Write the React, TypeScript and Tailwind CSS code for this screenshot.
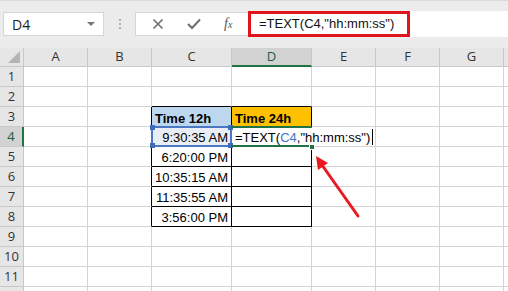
import React from 'react'

const cols = [
  { id: 'A', w: 64 },
  { id: 'B', w: 64 },
  { id: 'C', w: 80 },
  { id: 'D', w: 80 },
  { id: 'E', w: 64 },
  { id: 'F', w: 64 },
  { id: 'G', w: 64 },
  { id: 'H', w: 64 },
]

const times = ['9:30:35 AM', '6:20:00 PM', '10:35:15 AM', '11:35:55 AM', '3:56:00 PM']
const rows = Array.from({ length: 12 }, (_, i) => i + 1)

const ui = { fontFamily: '"Open Sans", "Noto Sans", sans-serif' }
const cellFont = { fontFamily: '"Liberation Sans", Arial, sans-serif' }

function inTable(r: number, c: string) {
  return r >= 3 && r <= 8 && (c === 'C' || c === 'D')
}

function Cell({ r, c }: { r: number; c: string }) {
  // gridline colours: black where the table's border sits on this edge
  const rightBlack = inTable(r, c) || (r >= 3 && r <= 8 && c === 'B')
  const bottomBlack = inTable(r, c) || (r === 2 && (c === 'C' || c === 'D'))
  let bg = 'bg-white'
  if (r === 3 && c === 'C') bg = 'bg-[#bdd7ee]'
  if (r === 3 && c === 'D') bg = 'bg-[#ffc000]'
  if (r === 4 && c === 'C') bg = 'bg-[#e9eef6]'

  return (
    <div
      className={`relative h-[20px] border-r border-b ${bg} ${rightBlack ? 'border-r-black' : 'border-r-[#d4d4d4]'} ${bottomBlack ? 'border-b-black' : 'border-b-[#d4d4d4]'}`}
    >
      {r === 3 && (c === 'C' || c === 'D') && (
        <span className="absolute left-[3px] bottom-[1px] text-[13px] font-bold leading-none text-black" style={cellFont}>
          {c === 'C' ? 'Time 12h' : 'Time 24h'}
        </span>
      )}
      {r >= 4 && r <= 8 && c === 'C' && (
        <span className="absolute right-[3px] bottom-[2px] text-[13px] leading-none text-black" style={cellFont}>
          {times[r - 4]}
        </span>
      )}
      {r === 4 && c === 'C' && (
        <div className="absolute -left-[1px] -top-[1px] w-[81px] h-[21px] border-2 border-[#4a78c2] z-10">
          <span className="absolute -left-[3px] -top-[3px] w-[5px] h-[5px] bg-[#3f6cb5]" />
          <span className="absolute -right-[3px] -top-[3px] w-[5px] h-[5px] bg-[#3f6cb5]" />
          <span className="absolute -left-[3px] -bottom-[3px] w-[5px] h-[5px] bg-[#3f6cb5]" />
          <span className="absolute -right-[3px] -bottom-[3px] w-[5px] h-[5px] bg-[#3f6cb5]" />
        </div>
      )}
      {r === 4 && c === 'D' && (
        <>
          <div className="absolute left-[1px] top-0 w-[142px] h-[19px] bg-white z-10 flex items-end pb-[2px]">
            <span className="text-[13px] leading-none text-black whitespace-nowrap pl-[2px]" style={cellFont}>
              =TEXT(<span className="text-[#4472c4]">C4</span>,"hh:mm:ss")
            </span>
            <span className="ml-[2px] w-px h-[16px] bg-black mb-[-1px]" />
          </div>
          <div className="absolute -left-[1px] -top-[1px] w-[81px] h-[21px] border-t-2 border-b-2 border-[#217346] z-20" />
          <span className="absolute -right-[4px] -bottom-[4px] w-[6px] h-[6px] bg-[#217346] border border-white z-30" />
        </>
      )}
    </div>
  )
}

export default function App() {
  return (
    <div className="w-[508px] h-[291px] overflow-hidden bg-[#e8e8e8] select-none">
      {/* formula bar */}
      <div className="h-[48px] flex items-center pt-[2px] pb-[3px] border-t border-[#d9d9d9] bg-[#ececec]">
        <div className="ml-[3px] w-[101px] h-[24px] bg-white border border-[#d6d6d6] flex items-center justify-between px-[8px]">
          <span className="text-[14px] text-[#222]" style={ui}>D4</span>
          <span className="w-0 h-0 border-l-[4px] border-r-[4px] border-t-[4px] border-l-transparent border-r-transparent border-t-[#777]" />
        </div>
        <div className="w-[31px] flex flex-col items-center gap-[2px]">
          <span className="w-[2px] h-[2px] bg-[#b0b0b0]" />
          <span className="w-[2px] h-[2px] bg-[#b0b0b0]" />
          <span className="w-[2px] h-[2px] bg-[#b0b0b0]" />
        </div>
        <div className="w-[113px] h-[24px] bg-white border border-[#d6d6d6] border-r-0 flex items-center justify-around px-[4px]">
          <svg width="12" height="12" viewBox="0 0 12 12">
            <path d="M1.5 1.5 L10.5 10.5 M10.5 1.5 L1.5 10.5" stroke="#6e6e6e" strokeWidth="1.6" />
          </svg>
          <svg width="14" height="12" viewBox="0 0 14 12">
            <path d="M1 6 L5 10 L13 1.5" stroke="#6e6e6e" strokeWidth="2" fill="none" />
          </svg>
          <span className="text-[14px] italic text-[#555] leading-none" style={{ fontFamily: '"Liberation Serif", serif' }}>
            f<span className="text-[10px]">x</span>
          </span>
        </div>
        <div className="flex-1 h-[26px] bg-white flex items-center">
          <div className="w-[162px] h-[26px] border-[3px] border-[#e0141a] flex items-center pl-[8px]">
            <span className="text-[13px] text-[#111] whitespace-nowrap" style={cellFont}>=TEXT(C4,"hh:mm:ss")</span>
          </div>
        </div>
      </div>

      {/* sheet */}
      <div className="relative">
        <div className="flex h-[19px]">
          <div className="w-[24px] shrink-0 border-r border-b border-[#c8c8c8] bg-[#e6e6e6] relative">
            <svg className="absolute right-[3px] bottom-[3px]" width="12" height="12" viewBox="0 0 12 12">
              <path d="M12 0 L12 12 L0 12 Z" fill="#b4b4b4" />
            </svg>
          </div>
          {cols.map((c) => (
            <div
              key={c.id}
              style={{ width: c.w }}
              className={`shrink-0 flex items-center justify-center text-[13px] border-r ${c.id === 'D' ? 'bg-[#d2d2d2] text-[#1e5c3a] border-b-2 border-b-[#217346] border-r-[#c8c8c8]' : 'bg-[#e6e6e6] text-[#333] border-b border-[#c8c8c8]'}`}
            >
              {c.id !== 'H' && <span style={ui}>{c.id}</span>}
            </div>
          ))}
        </div>
        {rows.map((r) => (
          <div key={r} className="flex">
            <div
              className={`w-[24px] h-[20px] shrink-0 flex items-center justify-center text-[13px] border-b border-[#c8c8c8] ${r === 4 ? 'bg-[#d2d2d2] text-[#1e5c3a] border-r-2 border-r-[#217346]' : 'bg-[#e6e6e6] text-[#333] border-r border-r-[#c8c8c8]'}`}
            >
              <span style={ui}>{r}</span>
            </div>
            {cols.map((c) => (
              <div key={c.id} style={{ width: c.w }} className="shrink-0">
                <Cell r={r} c={c.id} />
              </div>
            ))}
          </div>
        ))}

        {/* annotation arrow */}
        <svg className="absolute left-0 top-0 pointer-events-none z-40" width="508" height="243" viewBox="0 48 508 243">
          <line x1="358" y1="216" x2="322" y2="165" stroke="#e8191f" strokeWidth="3" strokeLinecap="round" />
          <path d="M316 156 L328 163 L318 170 Z" fill="#e8191f" />
        </svg>
      </div>
    </div>
  )
}
